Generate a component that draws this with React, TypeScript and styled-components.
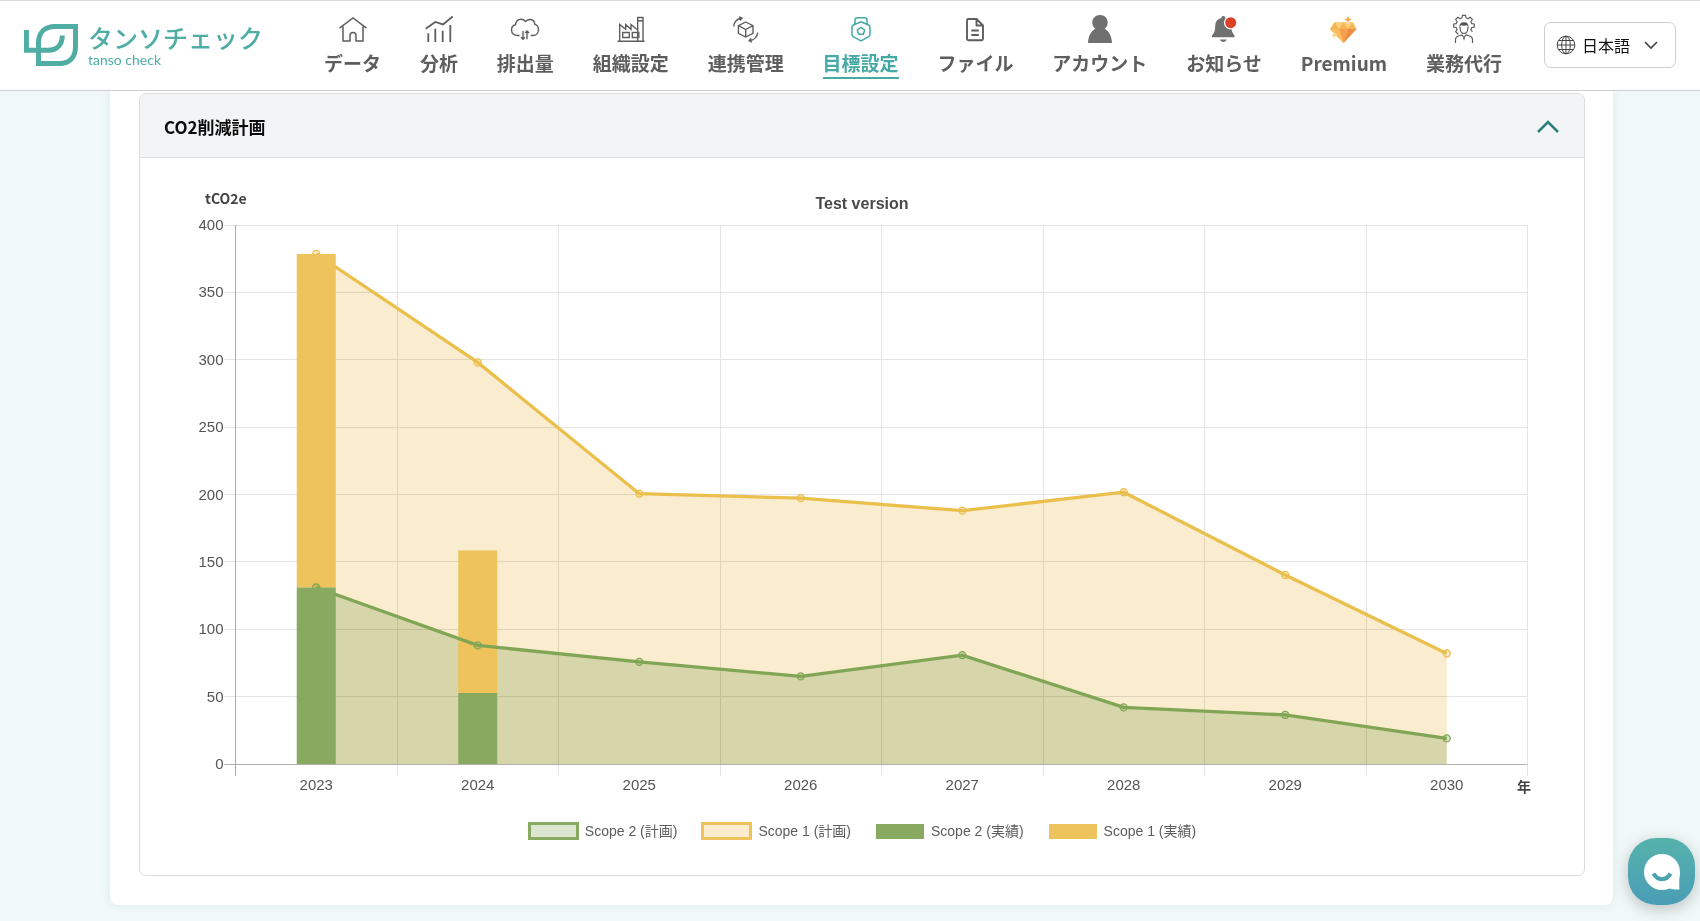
import React, { useState } from 'react';
import styled, { createGlobalStyle } from 'styled-components';

const teal = '#45a9a5';
const gothic = '"Noto Sans CJK JP", "Noto Sans", sans-serif';
const arial = '"Liberation Sans", "Noto Sans CJK JP", sans-serif';

const GlobalStyle = createGlobalStyle`
  *, *::before, *::after { box-sizing: border-box; }
  body {
    margin: 0;
    background: #f1f8f8;
    font-family: ${gothic};
    color: #5c5c5c;
  }
  button, select { font: inherit; color: inherit; }
`;

const Header = styled.header`
  position: relative;
  z-index: 1;
  display: flex;
  height: 91px;
  padding: 0 24px;
  background: #fff;
  border-top: 1px solid #dcdcdc;
  border-bottom: 1px solid #cfcfcf;
`;

const Brand = styled.a`
  flex: 0 0 300px;
  display: flex;
  align-items: flex-start;
  gap: 10px;
  padding-top: 23px;
  color: #4fada3;
  text-decoration: none;
`;

const BrandText = styled.span`
  display: flex;
  flex-direction: column;
`;

const BrandName = styled.span`
  font-size: 25px;
  line-height: 27px;
  font-weight: 500;
  white-space: nowrap;
`;

const BrandSub = styled.span`
  font-family: Lato, sans-serif;
  font-size: 14px;
  line-height: 18px;
`;

const Nav = styled.nav`
  flex: 1;
  display: flex;
  align-items: flex-start;
  justify-content: space-between;
  padding-top: 14px;
  margin-right: 42px;
`;

const NavLink = styled.a<{ $active?: boolean }>`
  display: flex;
  flex-direction: column;
  align-items: center;
  gap: 4px;
  color: ${(p) => (p.$active ? teal : '#5e5e5e')};
  text-decoration: none;
`;

const NavLabel = styled.span<{ $active?: boolean }>`
  padding-bottom: 1px;
  font-size: 19px;
  line-height: 27px;
  font-weight: 700;
  white-space: nowrap;
  border-bottom: 2px solid ${(p) => (p.$active ? teal : 'transparent')};
`;

const NavIcon = styled.svg`
  width: 30px;
  height: 30px;
  fill: none;
  stroke: currentColor;
  stroke-width: 1.4;
  overflow: visible;
`;

const LanguageBox = styled.label`
  flex: none;
  display: grid;
  grid-template-columns: 37px 1fr 32px;
  align-items: center;
  width: 132px;
  height: 46px;
  margin-top: 21px;
  border: 1px solid #cdcdcd;
  border-radius: 7px;
`;

const LanguageIcon = styled.svg<{ $column: number }>`
  grid-column: ${(p) => p.$column};
  grid-row: 1;
  width: 20px;
  height: 20px;
  margin-left: ${(p) => (p.$column === 1 ? 11 : 0)}px;
  fill: none;
  stroke: #444;
  pointer-events: none;
`;

const LanguageSelect = styled.select`
  grid-column: 1 / -1;
  grid-row: 1;
  height: 44px;
  padding: 0 0 0 37px;
  appearance: none;
  border: 0;
  border-radius: 7px;
  background: transparent;
  color: #111;
  font-size: 16px;
`;

const Sheet = styled.main`
  margin: 0 87px 15px 110px;
  padding: 2px 28px 29px 29px;
  background: #fff;
  border-radius: 0 0 8px 8px;
  box-shadow: 0 0 10px rgba(90, 180, 170, 0.16);
`;

const Card = styled.section`
  border: 1px solid #dcdcdc;
  border-radius: 7px;
  overflow: hidden;
`;

const CardHeading = styled.h2`
  margin: 0;
`;

const CardToggle = styled.button`
  display: flex;
  align-items: center;
  justify-content: space-between;
  width: 100%;
  height: 64px;
  padding: 2px 24px 0;
  border: 0;
  border-bottom: 1px solid #dcdcdc;
  background: #f3f4f6;
  color: #0c0c0c;
  font-size: 17px;
  line-height: 24px;
  font-weight: 700;
  text-align: left;
  cursor: pointer;
`;

const Chevron = styled.svg`
  width: 24px;
  height: 24px;
  fill: none;
  stroke: #2c8079;
  stroke-width: 2.6;
`;

const CardBody = styled.div`
  padding-bottom: 34px;
`;

const ChartSvg = styled.svg`
  display: block;
  width: 100%;
  height: auto;
`;

const TickText = styled.text`
  font-family: ${arial};
  font-size: 15px;
  fill: #555;
`;

const TitleText = styled.text`
  font-family: ${arial};
  font-size: 16px;
  font-weight: 700;
  fill: #4a4a4a;
`;

const UnitText = styled.text`
  font-family: ${gothic};
  font-size: 14px;
  font-weight: 700;
  fill: #444;
`;

const Legend = styled.ul`
  display: flex;
  justify-content: center;
  gap: 24px;
  margin: 0;
  padding: 0;
  list-style: none;
  font-family: ${arial};
  font-size: 14px;
  line-height: 20px;
`;

const LegendItem = styled.li`
  display: flex;
  align-items: center;
  gap: 6px;
`;

const Swatch = styled.span<{ $color: string; $outline?: boolean }>`
  width: ${(p) => (p.$outline ? 51 : 48)}px;
  height: ${(p) => (p.$outline ? 18 : 15)}px;
  margin: 0 ${(p) => (p.$outline ? 0 : 1)}px;
  background: ${(p) => (p.$outline ? `${p.$color}4d` : p.$color)};
  background-clip: padding-box;
  border: ${(p) => (p.$outline ? `3px solid ${p.$color}` : '0')};
`;

const ChatButton = styled.button`
  position: fixed;
  right: 5px;
  bottom: 16px;
  z-index: 2;
  display: grid;
  place-items: center;
  width: 67px;
  height: 67px;
  padding: 0;
  border: 0;
  border-radius: 28px;
  background: linear-gradient(#55b2ab, #4a9db6);
  box-shadow: 0 4px 16px rgba(0, 0, 0, 0.22);
  cursor: pointer;
`;

const ChatIcon = styled.svg`
  width: 38px;
  height: 38px;
`;

const gearPoints = (() => {
  // Outline of an eight-toothed gear, open at the bottom where the person stands.
  const out: string[] = [];
  for (let i = 0; i < 8; i += 1) {
    [[-14, 8], [-9, 10.4], [9, 10.4], [14, 8]].forEach(([off, r]) => {
      const a = ((i * 45 + off - 90) * Math.PI) / 180;
      out.push(`${(15 + r * Math.cos(a)).toFixed(1)},${(10.6 + r * Math.sin(a)).toFixed(1)}`);
    });
  }
  return out.slice(-13).concat(out.slice(0, 14)).join(' ');
})();

const icons: Record<string, React.ReactNode> = {
  home: (
    <path strokeWidth="1.5" d="M1.5 13.2 15 3l13.5 10.2M5 11.5V26h7v-5.5a3 3 0 0 1 6 0V26h7V11.5" />
  ),
  analysis: (
    <path strokeWidth="1.8" d="M1.7 13.7 11.3 7l7.7 2.4L28.7 1.5M4.3 18.3V27M11.3 13.7V27M18.7 15.7V27M26.3 10V27" />
  ),
  cloud: (
    <path d="M9.5 20.500H7.500C4 20.500 1.500 18.300 1.500 15c0-3 1.800-4.800 4-5.300C6 6.300 8.200 4.300 11 4.300c2 0 3.400.8 4.500 2.200C17 5 18.800 4.300 20.500 4.500c2.600.4 4.200 2.300 4.200 4.700 2.400.9 3.800 2.800 3.800 5.300 0 3.400-2.300 6-5.500 6h-2.300M13 16v8.300M11 22.300l2 2 2-2M17 24.300V16M15.200 18l1.800-2 2 2" />
  ),
  factory: (
    <path d="M1.500 26.200h27M3.700 26V9.500l6 4.800V9.500l5.300 4.800V9.500l6 5M21.700 26V2.500H27V26M21.700 5.800H27M6.700 17.500h6.600v5H6.700zM16.300 17.500h6.500v5h-6.500z" />
  ),
  connect: (
    <path d="m14.700 7 7.300 3.700v7.600L14.700 22l-7.300-3.700v-7.600zM7.400 10.700l7.300 3.800 7.300-3.800M14.700 14.500V22M2.700 11.500C3.200 7 6 3.800 10.500 3M8 1.800l3 1.200L9 5.500M26.700 17.500c-.5 4.500-3.500 7.500-8 8.300M21 27.200l-2.800-1.400 2-2.500" />
  ),
  target: (
    <g strokeWidth="1.500">
      <path d="m15 6.700 7.500 3.300q1.500.8 1.500 2.300v7q0 1.500-1.300 2.300L15 26l-7.700-4.400Q6 20.800 6 19.300v-7Q6 10.800 7.500 10zM9 9.300V5q0-2.300 2.300-2.300h7.400Q21 2.700 21 5v4.300" />
      <path d="m15 12.300 3.700 2.700-1.400 4.200h-4.600L11.300 15z" strokeLinejoin="round" />
    </g>
  ),
  file: (
    <path strokeWidth="1.900" strokeLinejoin="round" d="M16.500 4H8.500Q7 4 7 5.500v18.300q0 1.500 1.500 1.500h13q1.500 0 1.500-1.500V10.500zM16.500 4v6.500H23M11.300 15.500h7.500M11.300 20h7.500" />
  ),
  account: (
    <path fill="#707070" stroke="none" d="M15 0c4.600 0 7.700 3.300 7.700 7.600 0 2.700-1.200 4.800-3 6.100 4.300 2.400 7 7.300 7.300 14.300H3c.3-7 3-11.900 7.300-14.300-1.800-1.300-3-3.400-3-6.100C7.300 3.300 10.400 0 15 0z" />
  ),
  bell: (
    <g stroke="none">
      <path fill="#707070" d="M14.300 1c1.200 0 2 .8 2 1.900 3.500.8 6 3.700 6 7.300 0 4.500.8 8 3.200 10v2H3v-2c2.400-2 3.300-5.500 3.300-10 0-3.600 2.500-6.500 6-7.300 0-1.100.8-1.900 2-1.900zM11 24.500h6.600c-.3 1.500-1.600 2.400-3.300 2.400s-3-.9-3.300-2.400z" />
      <circle cx="21.700" cy="7.700" r="6.800" fill="#fff" />
      <circle cx="21.700" cy="7.700" r="5.500" fill="#db4127" />
    </g>
  ),
  premium: (
    <g stroke="none">
      <path fill="#f6b653" d="M5.500 7h18l4 7L14.500 28 1 14z" />
      <path fill="#fbd07a" d="M5.500 7 10 14l4.500-7L19 14l4.500-7z" />
      <path fill="#ee8b45" d="M19 14h8.500l-13 14z" />
      <path fill="#f5a04c" d="M10 14h9l-4.500 14z" />
      <path fill="#f9bd5e" d="M1 14h9l4.500 14z" />
      <path fill="#f4a73f" stroke="#fff" strokeWidth=".5" d="m19 0 1.200 3.300L23.500 4.500l-3.300 1.300L19 9l-1.200-3.200-3.300-1.300 3.300-1.200z" />
      <path fill="#fcd78c" d="m5.500 16 1 3 2.500 1-2.500 1-1 3-1-3-2.500-1 2.500-1z" />
    </g>
  ),
  agent: (
    <g strokeWidth="1.200">
      <polyline points={gearPoints} strokeLinejoin="round" />
      <path fill="#fff" stroke="none" d="M9.500 8h11v17h-11z" />
      <path fill="#fff" d="M11 12c0 4 1.800 6.500 4 6.500s4-2.500 4-6.500M6.500 28v-3.500c0-2 1.200-3 3-3.500l3.500-1 2 2.500 2-2.500 3.500 1c1.800.5 3 1.500 3 3.500V28" />
      <path fill="#555" stroke="none" d="M10.700 13c-.6-4 1-5.800 4.300-5.800s4.900 1.800 4.300 5.800c-.5-1.700-1-2.500-1.700-2.800-2 .7-3.800.6-5.300 0-.7.500-1.200 1.300-1.600 2.800zM14.200 23h1.600l-.8 3z" />
    </g>
  ),
};

const navItems = [
  { icon: 'home', label: 'データ' },
  { icon: 'analysis', label: '分析' },
  { icon: 'cloud', label: '排出量' },
  { icon: 'factory', label: '組織設定' },
  { icon: 'connect', label: '連携管理' },
  { icon: 'target', label: '目標設定', active: true },
  { icon: 'file', label: 'ファイル' },
  { icon: 'account', label: 'アカウント' },
  { icon: 'bell', label: 'お知らせ' },
  { icon: 'premium', label: 'Premium' },
  { icon: 'agent', label: '業務代行' },
];

const GREEN = '#88aa60';
const YELLOW = '#eec35b';
const GREEN_LINE = '#80a655';
const YELLOW_LINE = '#ebbf4c';

const years = [2023, 2024, 2025, 2026, 2027, 2028, 2029, 2030];
const planTotal = [378.5, 298, 200.6, 197.3, 188, 201.7, 140.3, 82];
const planScope2 = [131, 88, 75.8, 65, 80.8, 42, 36.4, 19];
const actuals = [
  { total: 378.5, scope2: 131 },
  { total: 158.5, scope2: 52.7 },
];
const ticks = [0, 50, 100, 150, 200, 250, 300, 350, 400];

const LEFT = 95.5;
const RIGHT = 1387.5;
const TOP = 67;
const BOTTOM = 606;
const STEP = (RIGHT - LEFT) / years.length;
const BAR = 39;

const xAt = (i: number) => LEFT + STEP * (i + 0.5);
const yAt = (v: number) => BOTTOM - (v / 400) * (BOTTOM - TOP);
const crisp = (n: number) => Math.floor(n) + 0.5;
const linePoints = (values: number[]) => values.map((v, i) => `${xAt(i)},${yAt(v)}`).join(' ');
const areaPoints = (upper: number[], lower: number[]) =>
  `${linePoints(upper)} ${lower.map((v, i) => `${xAt(i)},${yAt(v)}`).reverse().join(' ')}`;

function Series({ values, color }: { values: number[]; color: string }) {
  return (
    <g fill="none" stroke={color}>
      <polyline points={linePoints(values)} strokeWidth="3.300" />
      {values.map((v, i) => (
        <circle key={years[i]} cx={xAt(i)} cy={yAt(v)} r="3.500" strokeWidth="1.300" fill={`${color}4d`} />
      ))}
    </g>
  );
}

const Area = styled.polygon`
  mix-blend-mode: multiply;
`;

function Chart() {
  const zeros = years.map(() => 0);
  return (
    <ChartSvg viewBox="0 0 1444 663" role="img" aria-label="CO2削減計画">
      <TitleText x="722" y="51" textAnchor="middle">Test version</TitleText>
      <UnitText x="65" y="46">tCO2e</UnitText>
      <g stroke="#e4e4e4">
        {ticks.map((t) => (
          <line key={t} x1={LEFT - 11} x2={RIGHT} y1={crisp(yAt(t))} y2={crisp(yAt(t))} />
        ))}
        {[...years, 0].map((y, i) => (
          <line key={y} x1={crisp(LEFT + STEP * i)} x2={crisp(LEFT + STEP * i)} y1={TOP} y2={BOTTOM + 12} />
        ))}
      </g>
      <Area points={areaPoints(planTotal, zeros)} fill="#faedcf" />
      <Area points={areaPoints(planScope2, zeros)} fill="#dbe7d2" />
      <line x1={crisp(LEFT)} x2={crisp(LEFT)} y1={TOP} y2={BOTTOM + 12} stroke="#aaa" />
      <line x1={LEFT - 11} x2={RIGHT} y1={crisp(BOTTOM)} y2={crisp(BOTTOM)} stroke="#b3b0ac" />
      <Series values={planTotal} color={YELLOW_LINE} />
      {actuals.map((a, i) => (
        <rect key={years[i]} x={xAt(i) - BAR / 2} y={yAt(a.total)} width={BAR} height={yAt(a.scope2) - yAt(a.total)} fill={YELLOW} />
      ))}
      <Series values={planScope2} color={GREEN_LINE} />
      {actuals.map((a, i) => (
        <rect key={years[i]} x={xAt(i) - BAR / 2} y={yAt(a.scope2)} width={BAR} height={BOTTOM - yAt(a.scope2)} fill={GREEN} />
      ))}
      {ticks.map((t) => (
        <TickText key={t} x={LEFT - 12} y={yAt(t) + 5} textAnchor="end">{t}</TickText>
      ))}
      {years.map((y, i) => (
        <TickText key={y} x={xAt(i)} y={BOTTOM + 26} textAnchor="middle">{y}</TickText>
      ))}
      <UnitText x="1384" y="634" textAnchor="middle">年</UnitText>
    </ChartSvg>
  );
}

const legend = [
  { label: 'Scope 2 (計画)', color: GREEN, outline: true },
  { label: 'Scope 1 (計画)', color: YELLOW, outline: true },
  { label: 'Scope 2 (実績)', color: GREEN },
  { label: 'Scope 1 (実績)', color: YELLOW },
];

export default function App() {
  const [open, setOpen] = useState(true);
  return (
    <>
      <GlobalStyle />
      <Header>
        <Brand href="#" aria-label="タンソチェック">
          <svg width="54" height="42" viewBox="0 0 54 42" fill="none" stroke="currentColor" strokeWidth="5">
            <path d="M2.400 6v20.300H24C32.500 26.300 38.300 21 38.300 11.500" />
            <path d="M14.500 39.500V19C14.500 8.500 21 2.500 31 2.500h20.500v20c0 10.500-6 17-16 17z" />
          </svg>
          <BrandText>
            <BrandName>タンソチェック</BrandName>
            <BrandSub>tanso check</BrandSub>
          </BrandText>
        </Brand>
        <Nav>
          {navItems.map((item) => (
            <NavLink key={item.icon} href="#" $active={item.active} aria-current={item.active ? 'page' : undefined}>
              <NavIcon viewBox="0 0 30 30" aria-hidden="true">{icons[item.icon]}</NavIcon>
              <NavLabel $active={item.active}>{item.label}</NavLabel>
            </NavLink>
          ))}
        </Nav>
        <LanguageBox>
          <LanguageSelect aria-label="言語" defaultValue="ja">
            <option value="ja">日本語</option>
          </LanguageSelect>
          <LanguageIcon $column={1} viewBox="0 0 20 20" aria-hidden="true">
            <circle cx="10" cy="10" r="8.800" />
            <ellipse cx="10" cy="10" rx="4.300" ry="8.800" />
            <path d="M10 1.200v17.600M1.200 10h17.600M2.500 5.500h15M2.500 14.500h15" />
          </LanguageIcon>
          <LanguageIcon $column={3} viewBox="0 0 20 20" aria-hidden="true">
            <path d="m2 7 6 6 6-6" strokeWidth="1.600" />
          </LanguageIcon>
        </LanguageBox>
      </Header>
      <Sheet>
        <Card>
          <CardHeading>
            <CardToggle type="button" aria-expanded={open} onClick={() => setOpen(!open)}>
              CO2削減計画
              <Chevron viewBox="0 0 24 24" aria-hidden="true">
                <path d={open ? 'm2 17 10-10 10 10' : 'm2 7 10 10L22 7'} />
              </Chevron>
            </CardToggle>
          </CardHeading>
          {open && (
            <CardBody>
              <Chart />
              <Legend>
                {legend.map((l) => (
                  <LegendItem key={l.label}>
                    <Swatch $color={l.color} $outline={l.outline} />
                    {l.label}
                  </LegendItem>
                ))}
              </Legend>
            </CardBody>
          )}
        </Card>
      </Sheet>
      <ChatButton type="button" aria-label="チャット">
        <ChatIcon viewBox="0 0 38 38" aria-hidden="true">
          <circle cx="19" cy="19" r="18" fill="#fff" />
          <path fill="#fff" d="M37 19c-.8 6-.9 11-.6 17.500-4.400.3-8.400-.3-12.400-2z" />
          <path fill="none" stroke="#4ba3b2" strokeWidth="4" d="M10.500 20.500c4 7.500 13 7.500 17 0" />
        </ChatIcon>
      </ChatButton>
    </>
  );
}
